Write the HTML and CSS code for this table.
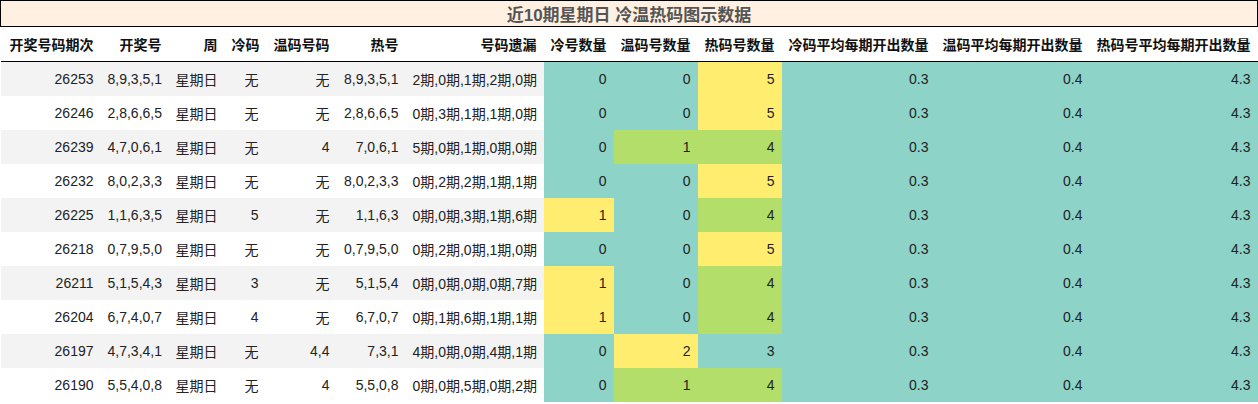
FILE: index.html
```html
<!DOCTYPE html>
<html lang="zh-CN">
<head>
<meta charset="utf-8">
<title>近10期星期日 冷温热码图示数据</title>
<link rel="stylesheet" href="styles.css">
</head>
<body>
<table class="tbl">
<colgroup>
<col style="width:100px"><col style="width:68px"><col style="width:56px"><col style="width:41px"><col style="width:71px"><col style="width:69px"><col style="width:138px"><col style="width:70px"><col style="width:84px"><col style="width:84px"><col style="width:154px"><col style="width:154px"><col style="width:168px">
</colgroup>
<thead>
<tr><th class="title" colspan="13">近10期星期日 冷温热码图示数据</th></tr>
<tr class="head">
<th>开奖号码期次</th><th>开奖号</th><th>周</th><th>冷码</th><th>温码号码</th><th>热号</th><th>号码遗漏</th><th>冷号数量</th><th>温码号数量</th><th>热码号数量</th><th>冷码平均每期开出数量</th><th>温码平均每期开出数量</th><th>热码号平均每期开出数量</th>
</tr>
</thead>
<tbody>
<tr><td>26253</td><td>8,9,3,5,1</td><td>星期日</td><td>无</td><td>无</td><td>8,9,3,5,1</td><td>2期,0期,1期,2期,0期</td><td class="c-t">0</td><td class="c-t">0</td><td class="c-y">5</td><td class="c-t">0.3</td><td class="c-t">0.4</td><td class="c-t">4.3</td></tr>
<tr><td>26246</td><td>2,8,6,6,5</td><td>星期日</td><td>无</td><td>无</td><td>2,8,6,6,5</td><td>0期,3期,1期,1期,0期</td><td class="c-t">0</td><td class="c-t">0</td><td class="c-y">5</td><td class="c-t">0.3</td><td class="c-t">0.4</td><td class="c-t">4.3</td></tr>
<tr><td>26239</td><td>4,7,0,6,1</td><td>星期日</td><td>无</td><td>4</td><td>7,0,6,1</td><td>5期,0期,1期,0期,0期</td><td class="c-t">0</td><td class="c-g">1</td><td class="c-g">4</td><td class="c-t">0.3</td><td class="c-t">0.4</td><td class="c-t">4.3</td></tr>
<tr><td>26232</td><td>8,0,2,3,3</td><td>星期日</td><td>无</td><td>无</td><td>8,0,2,3,3</td><td>0期,2期,2期,1期,1期</td><td class="c-t">0</td><td class="c-t">0</td><td class="c-y">5</td><td class="c-t">0.3</td><td class="c-t">0.4</td><td class="c-t">4.3</td></tr>
<tr><td>26225</td><td>1,1,6,3,5</td><td>星期日</td><td>5</td><td>无</td><td>1,1,6,3</td><td>0期,0期,3期,1期,6期</td><td class="c-y">1</td><td class="c-t">0</td><td class="c-g">4</td><td class="c-t">0.3</td><td class="c-t">0.4</td><td class="c-t">4.3</td></tr>
<tr><td>26218</td><td>0,7,9,5,0</td><td>星期日</td><td>无</td><td>无</td><td>0,7,9,5,0</td><td>0期,2期,0期,1期,0期</td><td class="c-t">0</td><td class="c-t">0</td><td class="c-y">5</td><td class="c-t">0.3</td><td class="c-t">0.4</td><td class="c-t">4.3</td></tr>
<tr><td>26211</td><td>5,1,5,4,3</td><td>星期日</td><td>3</td><td>无</td><td>5,1,5,4</td><td>0期,0期,0期,0期,7期</td><td class="c-y">1</td><td class="c-t">0</td><td class="c-g">4</td><td class="c-t">0.3</td><td class="c-t">0.4</td><td class="c-t">4.3</td></tr>
<tr><td>26204</td><td>6,7,4,0,7</td><td>星期日</td><td>4</td><td>无</td><td>6,7,0,7</td><td>0期,1期,6期,1期,1期</td><td class="c-y">1</td><td class="c-t">0</td><td class="c-g">4</td><td class="c-t">0.3</td><td class="c-t">0.4</td><td class="c-t">4.3</td></tr>
<tr><td>26197</td><td>4,7,3,4,1</td><td>星期日</td><td>无</td><td>4,4</td><td>7,3,1</td><td>4期,0期,0期,4期,1期</td><td class="c-t">0</td><td class="c-y">2</td><td class="c-t">3</td><td class="c-t">0.3</td><td class="c-t">0.4</td><td class="c-t">4.3</td></tr>
<tr><td>26190</td><td>5,5,4,0,8</td><td>星期日</td><td>无</td><td>4</td><td>5,5,0,8</td><td>0期,0期,5期,0期,2期</td><td class="c-t">0</td><td class="c-g">1</td><td class="c-g">4</td><td class="c-t">0.3</td><td class="c-t">0.4</td><td class="c-t">4.3</td></tr>
</tbody>
</table>
</body>
</html>
```
FILE: styles.css
```css
html, body {
  margin: 0;
  padding: 0;
  background: #fff;
}
body {
  font-family: "Liberation Sans", "Noto Sans CJK SC", sans-serif;
  font-size: 14px;
  color: #222;
}
.tbl {
  border-collapse: collapse;
  table-layout: fixed;
  width: 1257px;
}
.tbl th, .tbl td {
  padding: 0 7px;
  text-align: right;
  white-space: nowrap;
  overflow: hidden;
}
.title {
  height: 25px;
  background: #fff0e1;
  border: 1px solid #000;
  text-align: center !important;
  font-size: 17px;
  font-weight: bold;
  color: #555;
}
.head th {
  height: 34px;
  font-weight: bold;
  color: #111;
  border-bottom: 1px solid #000;
}
.tbl tbody td {
  height: 34px;
}
.tbl tbody tr:nth-child(odd) {
  background: #f3f3f3;
}
.tbl tbody tr:nth-child(even) {
  background: #fff;
}
.tbl tbody td.c-t { background: #8dd3c7; }
.tbl tbody td.c-y { background: #ffed6f; }
.tbl tbody td.c-g { background: #b3de69; }
```
